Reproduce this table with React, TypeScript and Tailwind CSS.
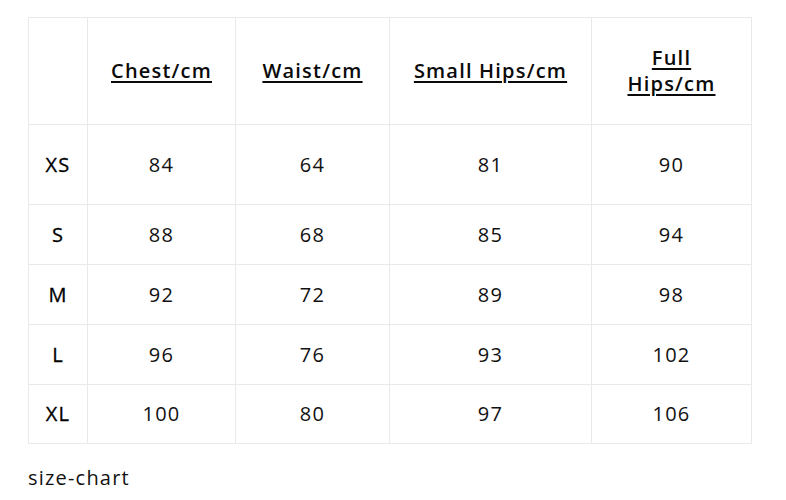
const headers = ["Chest/cm", "Waist/cm", "Small Hips/cm", "Full Hips/cm"];

const rows: [string, number[], string][] = [
  ["XS", [84, 64, 81, 90], "h-[80px]"],
  ["S", [88, 68, 85, 94], "h-[60px]"],
  ["M", [92, 72, 89, 98], "h-[60px]"],
  ["L", [96, 76, 93, 102], "h-[60px]"],
  ["XL", [100, 80, 97, 106], "h-[59px]"],
];

export default function App() {
  return (
    <div className="w-[786px] h-[500px] bg-white pt-[17px] pl-[28px] font-['Open_Sans',sans-serif] text-[20px] tracking-[1.2px] text-[#111]">
      <table className="table-fixed border-collapse w-[723px]">
        <colgroup>
          <col className="w-[59px]" />
          <col className="w-[148px]" />
          <col className="w-[154px]" />
          <col className="w-[202px]" />
          <col className="w-[160px]" />
        </colgroup>
        <thead>
          <tr className="h-[107px]">
            <th className="border border-[#e9e9e9]" />
            {headers.map((h) => (
              <th
                key={h}
                className="border border-[#e9e9e9] px-3 font-semibold text-[#0a0a0a] underline decoration-[2px] underline-offset-[3px] leading-[26px] text-center"
              >
                {h === "Full Hips/cm" ? (
                  <>
                    Full
                    <br />
                    Hips/cm
                  </>
                ) : (
                  h
                )}
              </th>
            ))}
          </tr>
        </thead>
        <tbody>
          {rows.map(([size, vals, h]) => (
            <tr key={size} className={h}>
              <td className="border border-[#e9e9e9] text-center text-black [-webkit-text-stroke:0.3px_black]">{size}</td>
              {vals.map((v, i) => (
                <td key={i} className="border border-[#e9e9e9] text-center">
                  {v}
                </td>
              ))}
            </tr>
          ))}
        </tbody>
      </table>
      <p className="mt-[19px]">size-chart</p>
    </div>
  );
}
